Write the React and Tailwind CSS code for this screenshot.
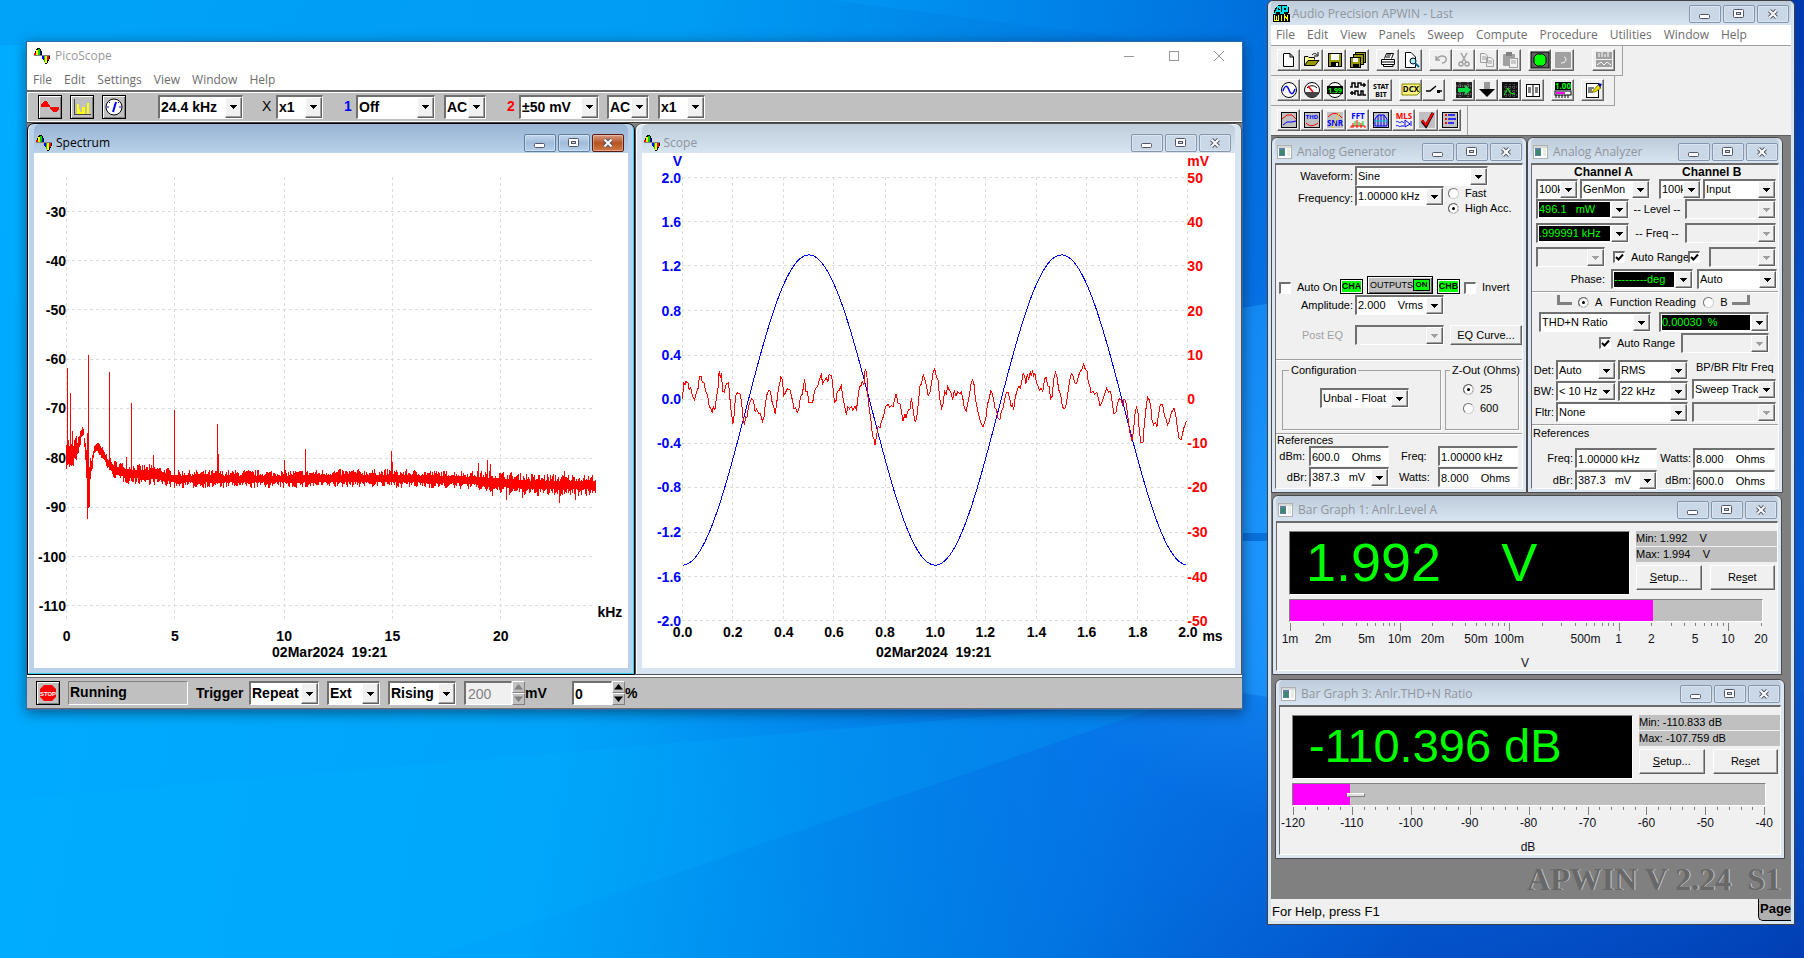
const SANS = "font-['Liberation_Sans',Arial,sans-serif]"
const UI = "font-['Open_Sans','Noto_Sans',sans-serif]"

/* ---------- small drawings ---------- */

function PicoIcon() {
  return (
    <svg className="shrink-0" width="16" height="16" viewBox="0 0 16 16" shapeRendering="crispEdges">
      <path d="M0 8V5H1V3H2V1H3V0H6V1H7V3H8V8H9V12H10V14H11V16H13V15H14V13H15V11H16V7H8V8Z" fill="#000" />
      <rect x="0" y="5" width="2" height="2" fill="#f00" />
      <rect x="2" y="2" width="2" height="5" fill="#ff0" />
      <rect x="4" y="1" width="2" height="6" fill="#0c0" />
      <rect x="6" y="3" width="1" height="4" fill="#00f" />
      <rect x="8" y="8" width="2" height="3" fill="#00f" />
      <rect x="10" y="8" width="2" height="6" fill="#0c0" />
      <rect x="11" y="8" width="2" height="7" fill="#ff0" />
      <rect x="13" y="8" width="2" height="4" fill="#f00" />
      <path d="M0 7.500H16" stroke="#808080" />
    </svg>
  )
}

function DocIcon() {
  return (
    <svg className="shrink-0" width="15" height="14" viewBox="0 0 15 14" shapeRendering="crispEdges">
      <rect x="0.5" y="0.5" width="14" height="13" fill="#fff" stroke="#b0b0b0" />
      <rect x="1" y="1" width="13" height="2" fill="#d8d8d8" />
      <rect x="2" y="3" width="6" height="8" fill="#5b7f9f" />
      <rect x="3" y="5" width="4" height="5" fill="#3a8a6a" />
      <rect x="10" y="3" width="3" height="8" fill="#e4eee4" />
    </svg>
  )
}

function ApIcon() {
  return (
    <svg className="shrink-0" width="17" height="17" viewBox="0 0 17 17" shapeRendering="crispEdges">
      <path d="M1 9V6L3 2L6 0H14L16 3V8L14 9Z" fill="#000" />
      <path d="M2 9L5 2H7L8 9M3 6H8M10 9V2H14V6H10" fill="none" stroke="#00e0e8" strokeWidth="1.500" />
      <rect x="0" y="9" width="17" height="8" fill="#000" />
      <path d="M1.500 10V15H3.500V11V15H5.500V10M8.500 10V16M11.500 16V10L14.500 15V10" fill="none" stroke="#ff0" />
    </svg>
  )
}

/* ---------- window chrome ---------- */

function AeroButtons({ active, name }) {
  const base = active
    ? 'border-[#5f7f9f] bg-linear-to-b from-[#c3d7ec] via-[#a0bcdb] to-[#b5cfea]'
    : 'border-[#8496ae] bg-[#cad7e6]'
  const close = active
    ? 'border-[#5b1a10] bg-linear-to-b from-[#d99a80] via-[#b5541f] to-[#cf7a45]'
    : base
  const cls = 'flex h-[18px] w-8 items-center justify-center rounded-[2px] border shadow-[inset_0_0_0_1px_rgba(255,255,255,0.35)]'
  return (
    <div className="flex shrink-0 gap-0.5">
      <button className={`${cls} ${base}`} aria-label={`Minimize ${name}`}>
        <svg width="12" height="12" viewBox="0 0 12 12">
          <rect x="0.5" y="6.5" width="10" height="4" rx="1" fill="#fff" stroke="#535666" />
        </svg>
      </button>
      <button className={`${cls} ${base}`} aria-label={`Maximize ${name}`}>
        <svg width="12" height="12" viewBox="0 0 12 12">
          <rect x="0.5" y="1.5" width="10" height="8" rx="1" fill="#fff" stroke="#535666" />
          <rect x="3.5" y="4.5" width="4" height="2" fill="#cad7e6" stroke="#535666" />
        </svg>
      </button>
      <button className={`${cls} ${close}`} aria-label={`Close ${name}`}>
        <svg width="12" height="12" viewBox="0 0 12 12">
          <path d="M2.5 2.5L9.5 9.5M9.5 2.5L2.5 9.5" stroke="#535666" strokeWidth="4" />
          <path d="M2.5 2.5L9.5 9.5M9.5 2.5L2.5 9.5" stroke="#fff" strokeWidth="2" />
        </svg>
      </button>
    </div>
  )
}

function ChildWindow({ title, place, children }) {
  return (
    <section className={`absolute flex flex-col rounded-t-[6px] border border-[#4a4a4a] bg-[#dbe6f2] px-[3px] pb-[3px] ${place}`}>
      <header className="flex h-[25px] shrink-0 items-center rounded-t-[5px] bg-linear-to-b from-[#bdcbda] to-[#d8e4f1] pt-0.5 pr-px">
        <span className="pl-0.5"><DocIcon /></span>
        <h2 className={`flex-1 pl-[5px] text-[12px] whitespace-nowrap text-[#8f959c] ${UI}`}>{title}</h2>
        <AeroButtons name={title} />
      </header>
      <div className="min-h-0 flex-1 border border-t-2 border-t-[#6a6a6a] border-l-[#6a6a6a] border-r-white border-b-white bg-[#f0f0f0]">
        {children}
      </div>
    </section>
  )
}

/* ---------- form controls ---------- */

const SUNKEN = 'border-t-2 border-l-2 border-r border-b border-t-[#707070] border-l-[#707070] border-r-white border-b-white'
const RAISED = 'border border-t-white border-l-white border-r-[#606060] border-b-[#606060] bg-[#f0f0f0]'

function Combo({ id, label, value = '', width, disabled, lcd, bold }) {
  const height = bold ? 'h-6' : 'h-5'
  const field = lcd ? 'bg-black text-[#00ff00]' : disabled ? 'bg-[#f0f0f0]' : 'bg-white text-black'
  return (
    <span className={`flex shrink-0 ${height} ${width} ${SUNKEN} ${disabled ? 'bg-[#f0f0f0]' : 'bg-white'}`}>
      <select
        id={id}
        aria-label={label}
        disabled={disabled}
        className={`min-w-0 flex-1 appearance-none ${lcd ? 'm-px' : 'pl-px'} ${field} ${bold ? 'text-[14px] font-bold' : 'text-[11px]'}`}
      >
        <option>{value}</option>
      </select>
      <span className={`pointer-events-none flex w-[17px] shrink-0 items-center justify-center shadow-[inset_-1px_-1px_0_#a0a0a0] ${RAISED}`}>
        <svg width="7" height="4" viewBox="0 0 7 4" shapeRendering="crispEdges">
          <path d="M0 0H7L3.5 4Z" fill={disabled ? '#a0a0a0' : '#000'} />
        </svg>
      </span>
    </span>
  )
}

function Field({ id, value, width }) {
  return <input id={id} defaultValue={value} className={`h-5 shrink-0 bg-white pl-px text-[11px] text-black ${width} ${SUNKEN}`} />
}

function Check({ id, label, checked }) {
  return (
    <span className="relative h-3 w-3 shrink-0">
      <input id={id} type="checkbox" aria-label={label} defaultChecked={checked} className={`peer block h-3 w-3 appearance-none bg-white ${SUNKEN}`} />
      <svg className="pointer-events-none absolute top-0.5 left-0.5 hidden peer-checked:block" width="9" height="9" viewBox="0 0 9 9">
        <path d="M1 4L3.5 6.5L8 1.5" fill="none" stroke="#000" strokeWidth="2" />
      </svg>
    </span>
  )
}

function Radio({ id, name, checked }) {
  return (
    <input
      id={id}
      type="radio"
      name={name}
      defaultChecked={checked}
      className="h-[11px] w-[11px] shrink-0 appearance-none rounded-full border border-t-[#707070] border-r-[#d0d0d0] border-b-[#d0d0d0] border-l-[#707070] bg-white checked:bg-black checked:shadow-[inset_0_0_0_3px_white]"
    />
  )
}

function Rule({ className = '' }) {
  return <div className={`h-0.5 border-t border-b border-t-[#a0a0a0] border-b-white ${className}`} />
}

/* ---------- PicoScope plots ---------- */

// knots of the noise floor: [x, centre, half height]
const FLOOR = [
  [66, 452, 16], [72, 456, 13], [75, 450, 14], [78, 446, 8], [81, 434, 6], [83, 432, 6], [85, 453, 9], [87, 473, 20],
  [89, 480, 20], [91, 466, 8], [94, 450, 6], [96, 447, 6], [100, 451, 6], [106, 460, 6], [111, 468, 7], [118, 471, 9],
  [131, 474, 9], [155, 475, 9], [175, 479, 8], [286, 479, 8], [367, 478, 8], [469, 480, 8], [490, 482, 10],
  [530, 485, 10], [596, 485, 9],
]

// discrete lines: [x, top, bottom]
const LINES = [
  [67, 368, 465], [70, 393, 465], [72, 431, 465], [87, 433, 519], [88, 355, 508], [89, 480, 507], [109, 372, 470],
  [131, 403, 475], [126, 457, 475], [153, 455, 476], [174, 410, 480], [217, 424, 480], [218, 454, 480], [283, 460, 480],
  [304, 449, 480], [390, 451, 480], [391, 462, 480], [477, 463, 480], [486, 460, 480], [489, 464, 480], [491, 480, 496],
  [505, 480, 500], [558, 485, 503], [574, 485, 500], [563, 471, 485], [521, 485, 498],
]

function floorPath() {
  let seed = 7
  const rand = () => {
    seed = (seed * 16807) % 2147483647
    return seed / 2147483647
  }
  let d = ''
  let k = 0
  for (let x = 66; x < 595; x += 1) {
    while (FLOOR[k + 1][0] <= x) k += 1
    const [x0, c0, h0] = FLOOR[k]
    const [x1, c1, h1] = FLOOR[k + 1]
    const t = (x - x0) / (x1 - x0)
    const c = c0 + (c1 - c0) * t
    const h = h0 + (h1 - h0) * t
    const up = h * (0.42 + 0.75 * rand() ** 1.5)
    const down = h * (0.42 + 0.75 * rand() ** 1.5)
    d += `M${x - 33.5} ${Math.round(c - up - 154)}V${Math.round(c + down - 154)}`
  }
  LINES.forEach(([x, top, bottom]) => {
    d += `M${x - 33.5} ${top - 154}V${bottom - 154}`
  })
  return d
}

function SpectrumPlot() {
  const kHz = [0, 5, 10, 15, 20]
  const dB = [-30, -40, -50, -60, -70, -80, -90, -100, -110]
  const px = (f) => Math.round(32 + f * 21.65) + 0.5
  const py = (v) => Math.round(58 + (-30 - v) * 4.91) + 0.5
  return (
    <svg className={`block h-full w-full ${SANS}`} viewBox="0 0 592 514" fontSize="14" fontWeight="700">
      <g stroke="#dcdcdc" strokeDasharray="3 3" shapeRendering="crispEdges">
        {kHz.map((f) => <line key={f} x1={px(f)} x2={px(f)} y1="24" y2="465" />)}
        {dB.map((v) => <line key={v} x1="32" x2="557" y1={py(v)} y2={py(v)} />)}
      </g>
      <path d={floorPath()} stroke="#f00" shapeRendering="crispEdges" />
      {dB.map((v) => <text key={v} x="32" y={py(v) + 5} textAnchor="end">{v}</text>)}
      {kHz.map((f) => <text key={f} x={px(f)} y="487" textAnchor="middle">{f}</text>)}
      <text x="562" y="463">kHz</text>
      <text x="295" y="503" textAnchor="middle">02Mar2024{'\u00a0\u00a0'}19:21</text>
    </svg>
  )
}

// channel 2 samples in display counts, 2.45 per pixel across and 3 per pixel down
const CH2 = `152,118 154,70 158,75 160,66 165,70 168,90 172,85 176,108 181,120 186,98 190,85 193,50 198,52 200,68 204,70 208,95
213,105 217,140 221,148 224,158 227,142 231,150 235,110 239,80 241,35 244,52 247,45 250,95 254,98 258,75 264,68 267,110
270,150 275,193 278,165 281,110 285,100 292,102 296,125 299,170 303,195 306,172 309,175 312,150 315,130 320,118 325,122
329,155 333,148 337,160 342,163 347,185 351,170 354,135 358,105 363,92 367,97 371,130 375,145 378,163 382,130 386,85
389,75 392,52 396,62 399,108 403,100 408,88 414,90 418,110 421,125 424,148 428,145 432,158 436,148 440,110 444,105
447,85 450,58 453,95 457,95 460,128 465,130 470,128 474,95 478,85 482,80 486,60 491,45 494,72 499,62 503,55 507,65
510,45 516,48 519,80 523,128 527,122 530,95 535,92 540,75 543,110 547,135 552,165 556,142 560,148 564,140 568,152
573,140 577,150 580,118 584,82 588,78 591,65 595,75 598,28 602,40 605,110 608,150 612,180 616,228 620,238 622,257
626,228 630,200 634,205 638,185 643,170 648,140 654,135 658,143 662,137 666,142 670,118 674,102 678,130 683,132
688,165 691,185 695,162 698,175 703,152 708,148 711,115 714,140 718,175 721,188 725,165 728,130 732,80 736,72 740,45
744,60 748,78 752,108 756,100 760,72 764,40 768,28 772,50 776,60 780,115 785,145 789,130 792,95 797,105 799,78 803,90
808,100 812,120 816,92 820,110 824,97 829,102 833,98 837,118 840,142 845,155 849,130 853,105 857,70 861,60 864,75
867,115 871,140 875,162 878,180 881,190 886,202 890,188 893,175 897,135 901,115 905,95 909,102 912,120 915,145
919,150 922,175 927,180 931,155 935,145 939,120 943,100 947,97 951,115 955,142 958,135 961,150 965,112 969,95 973,80
977,85 981,65 984,42 988,50 991,72 994,45 998,60 1002,35 1004,50 1007,32 1010,48 1013,42 1017,72 1021,80 1024,92
1028,85 1032,98 1036,60 1040,52 1044,78 1048,82 1051,118 1055,110 1059,60 1063,38 1067,52 1071,90 1076,105 1080,142
1086,148 1090,130 1094,95 1098,60 1102,42 1106,50 1110,70 1115,72 1119,50 1124,35 1129,28 1132,12 1136,30 1140,32
1143,65 1147,80 1150,100 1155,95 1159,105 1164,98 1168,115 1172,138 1176,130 1180,115 1184,100 1188,85 1193,98
1198,95 1202,130 1206,162 1211,158 1215,130 1219,118 1223,120 1227,135 1231,118 1235,125 1240,170 1244,215 1250,243
1254,215 1257,165 1261,140 1265,160 1268,215 1272,248 1277,248 1280,200 1284,150 1288,112 1292,120 1296,140 1299,180
1303,195 1307,188 1311,200 1315,165 1319,135 1325,135 1329,165 1333,178 1337,195 1341,185 1346,160 1353,145 1357,165
1361,205 1365,235 1370,240 1374,220 1378,200 1383,185`

function ScopePlot() {
  const steps = [0, 1, 2, 3, 4, 5, 6, 7, 8, 9, 10]
  const px = (i) => Math.round(40 + i * 50.4) + 0.5
  const py = (i) => Math.round(24 + i * 44.2) + 0.5
  const sine = []
  for (let x = 0; x <= 502; x += 2) {
    const v = -0.1 - 1.4 * Math.cos((2 * Math.PI * x) / 252)
    sine.push(`${x + 40.5},${(245.3 - v * 110.5).toFixed(1)}`)
  }
  const ch2 = CH2.split(/\s+/).map((p) => {
    const [x, y] = p.split(',')
    return `${(x / 2.45 - 21.5).toFixed(1)},${(y / 3 + 206).toFixed(1)}`
  })
  return (
    <svg className={`block h-full w-full ${SANS}`} viewBox="0 0 592 514" fontSize="14" fontWeight="700">
      <g stroke="#dcdcdc" strokeDasharray="3 3" shapeRendering="crispEdges">
        {steps.map((i) => <line key={i} x1={px(i)} x2={px(i)} y1="24" y2="466" />)}
        {steps.map((i) => <line key={i} x1="40" x2="544" y1={py(i)} y2={py(i)} />)}
      </g>
      <polyline points={sine.join(' ')} fill="none" stroke="#00f" shapeRendering="crispEdges" />
      <polyline points={ch2.join(' ')} fill="none" stroke="#f00" shapeRendering="crispEdges" />
      <g fill="#00f" textAnchor="end">
        <text x="40" y="13">V</text>
        {steps.map((i) => <text key={i} x="39" y={py(i) + 5}>{((5 - i) * 0.4).toFixed(1)}</text>)}
      </g>
      <g fill="#f00">
        <text x="544" y="13">mV</text>
        {steps.map((i) => <text key={i} x="544" y={py(i) + 5}>{(5 - i) * 10}</text>)}
      </g>
      {steps.map((i) => <text key={i} x={px(i)} y="483" textAnchor="middle">{(i * 0.2).toFixed(1)}</text>)}
      <text x="559" y="487">ms</text>
      <text x="291" y="503" textAnchor="middle">02Mar2024{'\u00a0\u00a0'}19:21</text>
    </svg>
  )
}

function PlotWindow({ title, active, children }) {
  const frame = active
    ? 'border-black bg-[#b9d1ea] shadow-[inset_-1px_-1px_0_#35d0f0,inset_1px_0_0_#fff]'
    : 'border-[#505050] bg-[#d7e4f2] shadow-[inset_1px_1px_0_#fff]'
  const bar = active ? 'from-[#98b4d2] to-[#b9d1ea]' : 'from-[#bfcddb] to-[#d7e4f2]'
  return (
    <section className={`flex min-w-0 flex-1 flex-col rounded-t-[7px] border px-1.5 pb-1.5 ${frame}`}>
      <header className={`flex h-[31px] items-center rounded-t-[6px] bg-linear-to-b pt-2.5 pr-1 pl-0.5 ${bar}`}>
        <PicoIcon />
        <h2 className={`flex-1 pl-1 text-[12px] ${active ? 'text-black' : 'text-[#8f959c]'} ${UI}`}>{title}</h2>
        <AeroButtons active={active} name={title} />
      </header>
      <div className="flex-1 bg-white">{children}</div>
    </section>
  )
}

function ToolButton({ label, children }) {
  return (
    <button aria-label={label} className="flex h-6 w-6 shrink-0 items-center justify-center border border-black bg-[#c0c0c0] shadow-[inset_1px_1px_0_#fff,inset_-1px_-1px_0_#808080]">
      {children}
    </button>
  )
}

function Spinner({ name, disabled }) {
  const fill = disabled ? '#808080' : '#000'
  return (
    <span className="flex h-6 w-[13px] shrink-0 flex-col">
      <button aria-label={`Increase ${name}`} className="flex flex-1 items-center justify-center border border-t-white border-l-white border-r-[#808080] border-b-[#808080]">
        <svg width="9" height="6" viewBox="0 0 9 6"><path d="M0 5.5L4.5 0L9 5.5Z" fill={fill} /></svg>
      </button>
      <button aria-label={`Decrease ${name}`} className="flex flex-1 items-center justify-center border border-t-white border-l-white border-r-[#808080] border-b-[#808080]">
        <svg width="9" height="6" viewBox="0 0 9 6"><path d="M0 0.5L4.5 6L9 0.5Z" fill={fill} /></svg>
      </button>
    </span>
  )
}

function PicoScope() {
  return (
    <main className="absolute top-[41px] left-[26px] flex h-[669px] w-[1217px] flex-col border border-[#2b6cb0] bg-white shadow-[0_3px_12px_rgba(0,0,0,0.45)]">
      <header className={`flex h-7 items-center pl-[7px] text-[12px] text-[#999] ${UI}`}>
        <PicoIcon />
        <h1 className="flex-1 pl-[5px]">PicoScope</h1>
        <button aria-label="Minimize PicoScope" className="w-[46px]">
          <svg className="mx-auto" width="11" height="11"><path d="M0 5.5H10" stroke="#999" /></svg>
        </button>
        <button aria-label="Maximize PicoScope" className="w-[44px]">
          <svg className="mx-auto" width="11" height="11"><rect x="0.5" y="0.5" width="9" height="9" fill="none" stroke="#999" /></svg>
        </button>
        <button aria-label="Close PicoScope" className="w-[46px]">
          <svg className="mx-auto" width="11" height="11"><path d="M0 0L10 10M10 0L0 10" stroke="#999" /></svg>
        </button>
      </header>
      <nav className={`flex h-5 items-center gap-3 pl-1.5 text-[12px] text-[#6d6d6d] ${UI}`}>
        {['File', 'Edit', 'Settings', 'View', 'Window', 'Help'].map((m) => <button key={m}>{m}</button>)}
      </nav>

      <div className={`flex h-8 items-center border-t-2 border-b border-t-[#6a6a6a] border-b-white bg-[#c0c0c0] pl-[11px] text-[14px] font-bold shadow-[inset_1px_1px_0_#fff] ${SANS}`}>
        <div className="flex gap-2">
          <ToolButton label="Scope">
            <svg width="18" height="18" viewBox="0 0 18 18" shapeRendering="crispEdges">
              <path d="M0 9V7L3 3H6L9 8V9ZM9 9H18V12L15 14H12L9 10Z" fill="#f00" />
            </svg>
          </ToolButton>
          <ToolButton label="Spectrum">
            <svg width="18" height="18" viewBox="0 0 18 18" shapeRendering="crispEdges">
              <path d="M1.5 1V16.5H18" stroke="#444" fill="none" />
              <path d="M4 16V6H6V11H7V14H9V9H12V16ZM14 16V5H16V16Z" fill="#ff0" />
            </svg>
          </ToolButton>
          <ToolButton label="Meter">
            <svg width="18" height="18" viewBox="0 0 18 18">
              <circle cx="9" cy="9" r="8" fill="#fff" stroke="#000" />
              <path d="M11 4L8 14" stroke="#00f" strokeWidth="2" />
              <path d="M2 9H4M14 9H16M4 4L5 5M14 4L13 5" stroke="#00f" />
            </svg>
          </ToolButton>
        </div>
        <div className="flex items-center pl-8">
          <Combo bold label="Spectrum range" value="24.4 kHz" width="w-[85px]" />
          <label htmlFor="xzoom" className="w-[33px] pl-[19px] font-normal">X</label>
          <Combo bold id="xzoom" value="x1" width="w-[47px]" />
          <label htmlFor="ch1" className="w-[33px] pl-[21px] text-[#00f]">1</label>
          <Combo bold id="ch1" value="Off" width="w-[79px]" />
          <span className="w-[9px]" />
          <Combo bold label="Channel 1 coupling" value="AC" width="w-[42px]" />
          <label htmlFor="ch2" className="w-[33px] pl-[21px] text-[#f00]">2</label>
          <Combo bold id="ch2" value="±50 mV" width="w-20" />
          <span className="w-2" />
          <Combo bold label="Channel 2 coupling" value="AC" width="w-[42px]" />
          <span className="w-[9px]" />
          <Combo bold label="Channel 2 zoom" value="x1" width="w-[47px]" />
        </div>
      </div>

      <div className="flex min-h-0 flex-1 border-t border-t-[#404040] bg-[#808080]">
        <PlotWindow title="Spectrum" active><SpectrumPlot /></PlotWindow>
        <PlotWindow title="Scope"><ScopePlot /></PlotWindow>
      </div>

      <footer className={`flex h-[34px] items-center border-t-2 border-b border-t-white border-b-[#6a6a6a] bg-[#c0c0c0] pt-px pl-[9px] text-[14px] font-bold shadow-[inset_0_1px_0_#6a6a6a] ${SANS}`}>
        <ToolButton label="Stop">
          <svg width="18" height="18" viewBox="0 0 18 18">
            <path d="M5 1H13L17 5V13L13 17H5L1 13V5Z" fill="#f00" />
            <text x="9" y="12" fontSize="6" textAnchor="middle" fill="#fff">STOP</text>
          </svg>
        </ToolButton>
        <output className="ml-2 h-6 w-[120px] border border-t-[#808080] border-l-[#808080] border-r-white border-b-white pl-px leading-5">Running</output>
        <label htmlFor="trigger" className="w-[61px] pl-2">Trigger</label>
        <div className="flex gap-2">
          <Combo bold id="trigger" value="Repeat" width="w-[70px]" />
          <Combo bold label="Trigger source" value="Ext" width="w-[53px]" />
          <Combo bold label="Trigger edge" value="Rising" width="w-[68px]" />
        </div>
        <input id="threshold" aria-label="Threshold" disabled defaultValue="200" className={`ml-2 h-6 w-12 bg-[#f0f0f0] pl-0.5 font-normal text-[#808080] ${SUNKEN}`} />
        <Spinner name="threshold" disabled />
        <label htmlFor="threshold" className="w-[47px]">mV</label>
        <input id="delay" aria-label="Delay percent" defaultValue="0" className={`h-6 w-10 bg-white pl-px ${SUNKEN}`} />
        <Spinner name="delay" />
        <label htmlFor="delay">%</label>
      </footer>
    </main>
  )
}

/* ---------- APWIN toolbar ---------- */

const G = '#a0a0a0'

const ICONS = {
  new: <path d="M5 3.5H11L14.500 7V16.500H4.500V3.500M11 3.500V7H14.500" fill="#fff" stroke="#000" />,
  open: <><path d="M2.5 15.500V6.500H6L7 7.500H12.500V9.500" fill="#ff9" stroke="#000" /><path d="M2.500 15.500L6 10.500H17L13 15.500Z" fill="#990" stroke="#000" /><path d="M10 5C12 3 14 3 15 5M16 2V6H12" fill="none" stroke="#000" /></>,
  save: <><rect x="3.5" y="3.5" width="13" height="13" fill="#990" stroke="#000" /><rect x="6" y="4" width="8" height="6" fill="#fff" /><rect x="6" y="12" width="8" height="5" /><rect x="11" y="13" width="2" height="3" fill="#fff" /></>,
  saveAll: <><rect x="7.5" y="2.500" width="10" height="10" fill="#990" stroke="#000" /><rect x="5.500" y="4.500" width="10" height="10" fill="#990" stroke="#000" /><rect x="2.500" y="7.500" width="10" height="10" fill="#990" stroke="#000" /><rect x="5" y="8" width="5" height="4" fill="#fff" /><rect x="5" y="14" width="6" height="3" /></>,
  print: <><path d="M6.5 8.500L8.500 3.500H15.500L13.500 8.500M3.500 9.500H16.500V14.500H3.500ZM5.500 14.500H15V16.500H5.500Z" fill="#fff" stroke="#000" /><path d="M3 12H17M9 5H13M8 7H12" stroke="#000" /></>,
  preview: <><path d="M4.5 2.500H10L14.500 7V17.500H4.500Z" fill="#fff" stroke="#000" /><circle cx="12" cy="11" r="3" fill="#aef" stroke="#000" /><path d="M14 13L18 17" stroke="#069" strokeWidth="2" /></>,
  undo: <path d="M5 6V10H9M5 10C8 5 14 5 15 8C16 11 14 13 11 13" fill="none" stroke={G} strokeWidth="1.5" />,
  cut: <path d="M7 3L12 12M13 3L8 12M9 14A2 2 0 1 1 5 14A2 2 0 1 1 9 14M15 14A2 2 0 1 1 11 14A2 2 0 1 1 15 14" fill="none" stroke={G} strokeWidth="1.500" />,
  copy: <path d="M3.5 3.500H8L10.500 6V12.500H3.500ZM9.500 7.500H14L16.500 10V16.500H9.500ZM5 7H9M5 9H9M11 11H15M11 13H15" fill="none" stroke={G} />,
  paste: <><rect x="3" y="4" width="12" height="12" rx="1" fill={G} /><rect x="6" y="2" width="6" height="4" fill="#808080" /><rect x="9.500" y="8.500" width="8" height="9" fill="#f0f0f0" stroke={G} /><path d="M11 11H16M11 13H16" stroke={G} /></>,
  go: <><rect x="1" y="2" width="18" height="16" fill="#606060" stroke="#000" /><path d="M7 4H13L16 7V13L13 16H7L4 13V7Z" fill="#0f0" stroke="#000" /></>,
  stop: <><rect x="2" y="2" width="16" height="16" rx="1" fill={G} /><path d="M11 7C14 7 14 13 8 13" fill="none" stroke="#fff" /></>,
  dual: <><path d="M2 2H18V9H2ZM2 10H18V17H2Z" fill={G} /><path d="M5 3V7M8 2V7M11 4V7M14 2V7M3 15L7 12L10 15L13 12L17 15" fill="none" stroke="#fff" /></>,
  gen: <><circle cx="10" cy="10" r="7.500" fill="#fff" stroke="#000" /><path d="M4 11C6 5 8 5 10 10C12 15 14 15 16 9" fill="none" stroke="#00f" strokeWidth="1.500" /></>,
  meter: <><circle cx="10" cy="10" r="7.500" fill="#fff" stroke="#000" /><path d="M3 12H17C15 19 5 19 3 12Z" fill="#444" /><path d="M5 8C8 5 12 5 15 8" fill="none" stroke="#000" /><path d="M11 12L6 6" stroke="#f00" strokeWidth="1.500" /></>,
  digital: <><circle cx="10" cy="10" r="7.500" fill="#fff" stroke="#000" /><rect x="2" y="6" width="16" height="8" /><text x="10" y="13" fontSize="7" fontWeight="700" textAnchor="middle" fill="#0f0">1.99</text></>,
  pulses: <path d="M2 7H4V3H7V7H10V3H13V5H18M16 3V7M2 13H7V15M4 11V15M7 15V11H10V15H13V11H15V15H18" fill="none" stroke="#000" strokeWidth="1.500" />,
  stat: <><text x="10" y="9" fontSize="7" fontWeight="700" textAnchor="middle">STAT</text><text x="10" y="17" fontSize="7" fontWeight="700" textAnchor="middle">BIT</text></>,
  dcx: <><path d="M1 4H19V12L16 15H1Z" fill="#fff980" stroke="#880" /><text x="10" y="12" fontSize="8" fontWeight="700" textAnchor="middle">DCX</text></>,
  sw: <><path d="M2 11H6L12 6M14 11H18" fill="none" stroke="#000" strokeWidth="1.500" /><rect x="13" y="10" width="3" height="3" /></>,
  sweep: <><rect x="2" y="2" width="16" height="16" fill="#222" /><path d="M2 6H18M2 14H18M6 2V18M14 2V18" stroke="#999" strokeDasharray="1 1" /><path d="M4 8H11V5L17 10L11 15V12H4Z" fill="#0d4" /></>,
  down: <><path d="M7 2H13V9H7Z" fill="#999" /><path d="M2 9H18L10 17Z" fill="#000" /></>,
  graph: <><rect x="2" y="2" width="16" height="16" fill="#111" /><path d="M6 4V17M10 4V17M14 4V17M4 7H17M4 11H17M4 15H17" stroke="#777" strokeDasharray="1 1" /><path d="M4 15L8 8L10 13L15 14" fill="none" stroke="#0f0" /></>,
  table: <><rect x="3.500" y="4.500" width="13" height="12" fill="#fff" stroke="#000" /><path d="M10 5V16M5 8H8M5 10H8M5 12H8M12 8H15M12 10H15M12 12H15" stroke="#000" /></>,
  bar: <><rect x="2" y="2" width="16" height="8" /><text x="10" y="9" fontSize="8" fontWeight="700" textAnchor="middle" fill="#0f0">1.00</text><rect x="2" y="11" width="16" height="4" fill="#fff" stroke="#000" /><rect x="3" y="12" width="9" height="2" fill="#f0f" /><path d="M3 15V18M6 15V18M9 15V18M12 15V18M15 15V18" stroke="#000" /></>,
  note: <><rect x="3.500" y="3.500" width="12" height="14" fill="#fff" stroke="#000" /><path d="M5 8H11M5 10H9M5 12H10" stroke="#000" /><path d="M9 12L15 5L18 8L12 12Z" fill="#ed0" stroke="#880" /><path d="M15 3L19 4L17 8Z" fill="#00a" /></>,
  curve: <><rect x="2.500" y="2.500" width="15" height="15" fill="#c0c0c0" stroke="#000" /><path d="M3 9L8 5H13L17 9" fill="none" stroke="#f00" /><path d="M4 15L8 12H13L17 11" fill="none" stroke="#00f" /></>,
  thd: <><rect x="2.500" y="2.500" width="15" height="15" fill="#c0c0c0" stroke="#000" /><text x="10" y="9" fontSize="6" fontWeight="700" textAnchor="middle" fill="#00f">THD</text><path d="M4 13C8 17 12 16 16 13" fill="none" stroke="#f00" /></>,
  snr: <><rect x="2" y="2" width="16" height="16" fill="#c0c0c0" /><path d="M3 7C8 2 12 2 17 8" fill="none" stroke="#f00" /><text x="10" y="16" fontSize="8" fontWeight="700" textAnchor="middle" fill="#00f">SNR</text><path d="M14 3L8 18" stroke="#fd0" /></>,
  fft: <><text x="10" y="9" fontSize="8" fontWeight="700" textAnchor="middle" fill="#00f">FFT</text><path d="M3 18V16H17V18M5 18V13M9 18V10M13 18V13" stroke="#f00" fill="none" /><path d="M7 16V11M11 16V12M15 16V11" stroke="#0c0" /></>,
  multi: <><rect x="2.500" y="2.500" width="15" height="15" fill="#c0c0c0" stroke="#000" /><path d="M4 16V9L7 5H13L16 9V16ZM7 5V16M10 5V16M13 5V16" fill="none" stroke="#00f" /><path d="M3 11H17" stroke="#0cc" /></>,
  mls: <><text x="10" y="9" fontSize="8" fontWeight="700" textAnchor="middle" fill="#f00">MLS</text><path d="M2 12C4 10 5 14 7 12C8 11 9 12 10 13M2 16C4 14 5 18 7 16L10 16M11 10L16 14L11 17ZM17 11V16" fill="none" stroke="#00f" /></>,
  check: <><rect x="2" y="2" width="16" height="16" fill="#c0c0c0" /><path d="M5 11L9 16L16 3" fill="none" stroke="#000" strokeWidth="3" /><path d="M5 10L9 15L16 3" fill="none" stroke="#f00" strokeWidth="2" /></>,
  list: <><rect x="2.500" y="2.500" width="15" height="15" fill="#c0c0c0" stroke="#000" /><path d="M8 5H15M8 9H16M8 13H14" stroke="#00f" strokeWidth="1.500" /><path d="M5 5H7M5 9H7M5 13H7" stroke="#f00" strokeWidth="2" /></>,
}

function IconBar({ groups, width }) {
  return (
    <div className={`flex h-[30px] items-center gap-[7px] border-r border-b border-[#a0a0a0] pb-px pl-1.5 ${width}`}>
      {groups.map((g, i) => (
        <div key={i} className="flex empty:w-1">
          {g.map((n) => (
            <button key={n} aria-label={n} className={`flex h-[22px] w-[23px] items-center justify-center shadow-[inset_-1px_-1px_0_#a0a0a0] ${RAISED}`}>
              <svg width="20" height="20" viewBox="0 0 20 20">{ICONS[n]}</svg>
            </button>
          ))}
        </div>
      ))}
    </div>
  )
}

/* ---------- APWIN panels ---------- */

const sp = (n) => '\u00a0'.repeat(n)

function Generator() {
  return (
    <ChildWindow title="Analog Generator" place="top-px left-0 h-[356px] w-[256px]">
      <div className="flex items-center pt-px">
        <label htmlFor="wave" className="w-[79px] pr-0.5 text-right">Waveform:</label>
        <Combo id="wave" value="Sine" width="w-[133px]" />
      </div>
      <div className="flex items-start">
        <label htmlFor="freq" className="w-[79px] pr-0.5 text-right leading-6">Frequency:</label>
        <Combo id="freq" value="1.00000 kHz" width="w-[89px]" />
        <div className="flex flex-col pl-1">
          <label className="flex h-[15px] items-center gap-1.5"><Radio name="acc" />Fast</label>
          <label className="flex h-[15px] items-center gap-1.5"><Radio name="acc" checked />High Acc.</label>
        </div>
      </div>
      <div className="mt-[60px] flex h-[18px] items-end pl-[3px]">
        <label className="flex w-[61px] items-center gap-1.5 whitespace-nowrap"><Check />Auto On</label>
        <button className="h-[15px] w-[23px] border border-black bg-[#0f0] text-[9px] font-bold shadow-[inset_0_0_0_1px_#fff]">CHA</button>
        <button className="mx-1 flex h-[18px] w-[66px] items-center justify-between border border-black bg-[#c0c0c0] pr-0.5 pl-0.5 text-[9px] shadow-[inset_1px_1px_0_#fff,inset_-1px_-1px_0_#606060]">
          OUTPUTS
          <span className="h-3 w-[17px] border border-black bg-[#0f0] text-[8px] leading-[10px] font-bold">ON</span>
        </button>
        <button className="h-[15px] w-[23px] border border-black bg-[#0f0] text-[9px] font-bold shadow-[inset_0_0_0_1px_#fff]">CHB</button>
        <label className="flex items-center gap-1.5 pl-1"><Check />Invert</label>
      </div>
      <div className="flex items-center pt-px">
        <label htmlFor="amp" className="w-[79px] pr-0.5 text-right">Amplitude:</label>
        <Combo id="amp" value={`2.000${sp(4)}Vrms`} width="w-[89px]" />
      </div>
      <div className="mt-2.5 flex items-center">
        <label htmlFor="posteq" className="w-[79px] pl-[26px] text-[#a0a0a0]">Post EQ</label>
        <Combo id="posteq" disabled width="w-[89px]" />
        <button className={`ml-1.5 h-5 flex-1 shadow-[inset_-1px_-1px_0_#a0a0a0] ${RAISED}`}>EQ Curve...</button>
      </div>
      <Rule className="mt-3.5" />
      <div className="mt-[3px] flex gap-1 pr-0.5 pl-1.5">
        <fieldset className="h-[66px] w-[159px] border border-[#a0a0a0] shadow-[1px_1px_0_#fff]">
          <legend className="ml-1.5 px-0.5 leading-3">Configuration</legend>
          <div className="pt-3 pl-[37px]">
            <Combo label="Configuration" value="Unbal - Float" width="w-[89px]" />
          </div>
        </fieldset>
        <fieldset className="h-[66px] w-[74px] min-w-0 border border-[#a0a0a0] shadow-[1px_1px_0_#fff]">
          <legend className="ml-1 px-0.5 leading-3 whitespace-nowrap">Z-Out (Ohms)</legend>
          <div className="flex flex-col gap-1 pt-1.5 pl-[17px]">
            <label className="flex h-[15px] items-center gap-1.5"><Radio name="zout" checked />25</label>
            <label className="flex h-[15px] items-center gap-1.5"><Radio name="zout" />600</label>
          </div>
        </fieldset>
      </div>
      <Rule className="mt-[3px] border-t-[#808080]" />
      <div className="pl-px leading-[11px]">References</div>
      <div className="grid grid-cols-[33px_80px_49px_80px] items-center gap-y-px">
        <label htmlFor="gdbm" className="pr-1 text-right">dBm:</label>
        <Field id="gdbm" value={`600.0${sp(4)}Ohms`} width="w-20" />
        <label htmlFor="gfreq" className="pl-3">Freq:</label>
        <Field id="gfreq" value="1.00000 kHz" width="w-20" />
        <label htmlFor="gdbr" className="pr-0.5 text-right">dBr:</label>
        <Combo id="gdbr" value={`387.3${sp(3)}mV`} width="w-20" />
        <label htmlFor="gwatts" className="pl-2.5">Watts:</label>
        <Field id="gwatts" value={`8.000${sp(4)}Ohms`} width="w-20" />
      </div>
    </ChildWindow>
  )
}

function Analyzer() {
  return (
    <ChildWindow title="Analog Analyzer" place="top-px left-64 h-[356px] w-[256px]">
      <div className="flex h-3.5 items-center pl-[42px] text-[12px] font-bold">
        <span className="w-[108px]">Channel A</span>
        <span>Channel B</span>
      </div>
      <div className="flex pl-1">
        <Combo label="Channel A impedance" value="100k" width="w-[42px]" />
        <span className="w-0.5" />
        <Combo label="Channel A source" value="GenMon" width="w-[70px]" />
        <span className="w-[9px]" />
        <Combo label="Channel B impedance" value="100k" width="w-[42px]" />
        <span className="w-0.5" />
        <Combo label="Channel B source" value="Input" width="w-[73px]" />
      </div>
      <div className="flex items-center justify-between pr-0.5 pl-1">
        <Combo lcd label="Channel A level" value={`496.1${sp(3)}mW`} width="w-[93px]" />
        <span>-- Level --</span>
        <Combo disabled label="Channel B level" width="w-[91px]" />
      </div>
      <div className="mt-1 flex items-center justify-between pr-0.5 pl-1">
        <Combo lcd label="Channel A frequency" value=".999991 kHz" width="w-[93px]" />
        <span>-- Freq --</span>
        <Combo disabled label="Channel B frequency" width="w-[91px]" />
      </div>
      <div className="mt-1 flex items-center pl-1">
        <Combo disabled label="Channel A range" width="w-[69px]" />
        <label className="ml-2 flex w-[75px] items-center gap-1.5 overflow-hidden whitespace-nowrap"><Check checked />Auto Range</label>
        <Check label="Auto range B" checked />
        <span className="w-[9px]" />
        <Combo disabled label="Channel B range" width="w-[67px]" />
      </div>
      <div className="mt-0.5 flex items-center">
        <label htmlFor="phase" className="w-[79px] pr-1.5 text-right">Phase:</label>
        <Combo lcd id="phase" value="---------deg" width="w-[82px]" />
        <span className="w-1" />
        <Combo label="Phase range" value="Auto" width="w-20" />
      </div>
      <Rule className="mt-0.5" />
      <div className="flex h-[19px] items-center pl-[25px]">
        <span className="mb-1.5 h-2.5 w-[15px] border-b-[3px] border-l-[3px] border-[#808080]" />
        <label className="flex items-center gap-1.5 pl-1.5"><Radio name="fn" checked />A</label>
        <span className="w-[101px] text-center">Function Reading</span>
        <label className="flex items-center gap-1.5"><Radio name="fn" />B</label>
        <span className="mb-1.5 ml-1 h-2.5 w-[18px] border-r-[3px] border-b-[3px] border-[#808080]" />
      </div>
      <div className="flex gap-2 pl-[7px]">
        <Combo label="Function" value="THD+N Ratio" width="w-28" />
        <Combo lcd label="Reading" value={`0.00030${sp(2)}%`} width="w-[110px]" />
      </div>
      <div className="mt-px flex items-center pl-[67px]">
        <label className="flex w-[82px] items-center gap-1.5 whitespace-nowrap"><Check checked />Auto Range</label>
        <Combo disabled label="Reading range" width="w-[88px]" />
      </div>
      <div className="mt-[7px] flex">
        <div className="grid grid-cols-[22px_60px_70px] items-center gap-x-0.5 gap-y-px">
          <label htmlFor="det" className="text-right">Det:</label>
          <Combo id="det" value="Auto" width="w-[60px]" />
          <Combo label="Detector" value="RMS" width="w-[70px]" />
          <label htmlFor="bw" className="text-right">BW:</label>
          <Combo id="bw" value="< 10 Hz" width="w-[60px]" />
          <Combo label="Upper bandwidth" value="22 kHz" width="w-[70px]" />
          <label htmlFor="fltr" className="text-right">Fltr:</label>
          <Combo id="fltr" value="None" width="w-[132px]" />
        </div>
        <div className="flex flex-col pl-1">
          <label htmlFor="bpbr" className="h-[19px] pl-1 leading-[14px] whitespace-nowrap">BP/BR Fltr Freq</label>
          <Combo id="bpbr" value="Sweep Track" width="w-[84px]" />
          <span className="h-[3px]" />
          <Combo disabled label="Filter frequency" width="w-[84px]" />
        </div>
      </div>
      <Rule className="mt-0.5" />
      <div className="pl-px leading-[14px]">References</div>
      <div className="grid grid-cols-[43px_82px_36px_82px] items-center gap-y-0.5 pt-2">
        <label htmlFor="afreq" className="pr-0.5 text-right">Freq:</label>
        <Field id="afreq" value="1.00000 kHz" width="w-[82px]" />
        <label htmlFor="awatts" className="pr-0.5 text-right">Watts:</label>
        <Field id="awatts" value={`8.000${sp(4)}Ohms`} width="w-[82px]" />
        <label htmlFor="adbr" className="pr-0.5 text-right">dBr:</label>
        <Combo id="adbr" value={`387.3${sp(3)}mV`} width="w-[82px]" />
        <label htmlFor="adbm" className="pr-0.5 text-right">dBm:</label>
        <Field id="adbm" value={`600.0${sp(4)}Ohms`} width="w-[82px]" />
      </div>
    </ChildWindow>
  )
}

function BarGraph({ title, place, reading, size, min, max, fill, marker, ticks, unit }) {
  return (
    <ChildWindow title={title} place={place}>
      <div className="flex h-full flex-col px-3 pt-2">
        <div className="-mr-3 flex gap-1.5">
          <output className={`h-16 w-[341px] shrink-0 border border-t-[#808080] border-l-[#808080] border-r-white border-b-white bg-black pl-4 leading-[60px] whitespace-nowrap text-[#0f0] ${size}`}>
            {reading}
          </output>
          <div className="flex flex-1 flex-col">
            <div className="h-[15px] bg-[#c0c0c0] leading-[14px]">Min: {min}</div>
            <div className="mt-px h-[15px] bg-[#c0c0c0] leading-[14px]">Max: {max}</div>
            <div className="mt-[3px] flex gap-2 pr-0.5">
              <button className={`h-[25px] flex-1 shadow-[inset_-1px_-1px_0_#a0a0a0] ${RAISED}`}><u>S</u>etup...</button>
              <button className={`h-[25px] flex-1 shadow-[inset_-1px_-1px_0_#a0a0a0] ${RAISED}`}>Re<u>s</u>et</button>
            </div>
          </div>
        </div>
        <div className="relative mt-1 h-6 w-[474px] border border-t-[#808080] border-l-[#808080] border-r-white border-b-white bg-[#c0c0c0]">
          <div className="h-full bg-[#f0f]" style={{ width: `${fill}%` }} />
          {marker && (
            <div
              className="absolute top-[9px] h-1 border border-t-white border-l-white border-r-[#808080] border-b-[#808080] bg-[#e0e0e0]"
              style={{ left: `${marker[0]}%`, width: `${marker[1]}%` }}
            />
          )}
        </div>
        <svg className="-ml-3 block shrink-0 overflow-visible" width="498" height="48" viewBox="-12 0 498 48" fontSize="12">
          {ticks.map(([x, text, long]) => (
            <g key={x}>
              <path d={`M${Math.round(x) + 0.5} 1V${long ? 9 : 4}`} stroke="#808080" shapeRendering="crispEdges" />
              {text && <text x={x} y="21" textAnchor="middle" fill="#101020">{text}</text>}
            </g>
          ))}
          <text x="236" y="45" textAnchor="middle" fill="#101020">{unit}</text>
        </svg>
      </div>
    </ChildWindow>
  )
}

const VOLT_LABELS = { 0.001: '1m', 0.002: '2m', 0.005: '5m', 0.01: '10m', 0.02: '20m', 0.05: '50m', 0.1: '100m', 0.5: '500m', 1: '1', 2: '2', 5: '5', 10: '10', 20: '20' }
const voltTicks = []
for (let dec = -3; dec <= 1; dec += 1) {
  for (let m = 1; m < 10; m += 1) {
    const v = Number((m * 10 ** dec).toPrecision(1))
    if (v <= 20) voltTicks.push([(Math.log10(v) + 3) * 109.5 + 1, VOLT_LABELS[v], m === 1])
  }
}

const dbTicks = []
for (let v = -120; v <= -40; v += 2) {
  dbTicks.push([(v + 120) * 5.89 + 1, v % 10 === 0 ? String(v) : null, v % 10 === 0])
}

function Apwin() {
  return (
    <section className="absolute top-0 left-[1267px] flex h-[925px] w-[528px] flex-col rounded-t-[6px] border border-[#404040] bg-[#d7e4f2] px-[3px] pb-[3px]">
      <header className="flex h-6 shrink-0 items-center bg-linear-to-b from-[#bdcbda] to-[#d8e4f1] pt-px pr-0.5 pl-0.5">
        <ApIcon />
        <h1 className={`flex-1 pl-0.5 text-[12px] text-[#8f959c] ${UI}`}>Audio Precision APWIN - Last</h1>
        <AeroButtons name="APWIN" />
      </header>
      <nav className={`flex h-5 shrink-0 items-center gap-3 bg-white pl-[5px] text-[12px] text-[#6d6d6d] ${UI}`}>
        {['File', 'Edit', 'View', 'Panels', 'Sweep', 'Compute', 'Procedure', 'Utilities', 'Window', 'Help'].map((m) => <button key={m}>{m}</button>)}
      </nav>
      <div className="h-[90px] shrink-0 border-t border-[#a0a0a0] bg-[#f0f0f0]">
        <IconBar width="w-[352px]" groups={[['new', 'open', 'save', 'saveAll'], ['print', 'preview'], ['undo', 'cut', 'copy', 'paste'], ['go', 'stop'], [], ['dual']]} />
        <IconBar width="w-[344px]" groups={[['gen', 'meter', 'digital', 'pulses', 'stat'], ['dcx', 'sw'], ['sweep', 'down', 'graph', 'table'], ['bar'], ['note']]} />
        <IconBar width="w-[197px]" groups={[['curve', 'thd', 'snr', 'fft', 'multi', 'mls', 'check', 'list']]} />
      </div>

      <div className={`relative flex min-h-0 flex-1 flex-col justify-end border-t border-[#606060] bg-[#808080] text-[11px] leading-[13px] text-black ${SANS}`}>
        <div className="pr-2.5 pb-0.5 text-right font-['Liberation_Serif','Times_New_Roman',serif] text-[32px] leading-9 font-bold whitespace-pre text-[#686868] [text-shadow:1px_0_0_#c8c8c8]">
          {'APWIN V 2.24  S1'}
        </div>
        <Generator />
        <Analyzer />
        <BarGraph
          title="Bar Graph 1: Anlr.Level A"
          place="top-[359px] left-px h-[180px] w-[510px]"
          reading={`1.992${sp(4)}V`}
          size="text-[54px]"
          min={`1.992${sp(4)}V`}
          max={`1.994${sp(4)}V`}
          fill={76.9}
          ticks={voltTicks}
          unit="V"
        />
        <BarGraph
          title="Bar Graph 3: Anlr.THD+N Ratio"
          place="top-[543px] left-1 h-[180px] w-[510px]"
          reading="-110.396 dB"
          size="text-[47px]"
          min="-110.833 dB"
          max="-107.759 dB"
          fill={12.1}
          marker={[11.5, 3.8]}
          ticks={dbTicks}
          unit="dB"
        />
      </div>
      <footer className={`flex h-[22px] shrink-0 items-center justify-between bg-[#f0f0f0] pl-px text-[13px] ${SANS}`}>
        <span className="pt-1">For Help, press F1</span>
        <span className="h-full w-[33px] overflow-hidden rounded-bl-[5px] border-b border-l border-black bg-[#b0b0b0] pl-px leading-[19px] font-bold">Page</span>
      </footer>
    </section>
  )
}

// light coming through the two window panes on the wallpaper
function Backdrop() {
  return (
    <svg className="absolute inset-0 h-full w-full" viewBox="0 0 1804 958" preserveAspectRatio="none">
      <path d="M1180 318L1290 300V533H1180Z" fill="#1e9bff" opacity="0.55" />
      <path d="M1180 541H1290V700L1180 684Z" fill="#1e9bff" opacity="0.65" />
      <path d="M1180 533H1290V541H1180Z" fill="#0060c8" opacity="0.6" />
      <path d="M0 800L1180 700L430 958H0Z" fill="#00b8ff" opacity="0.18" />
      <path d="M0 0H830L1180 45H0Z" fill="#0060c8" opacity="0.12" />
    </svg>
  )
}

export default function App() {
  return (
    <div className="relative min-h-screen overflow-hidden bg-[radial-gradient(ellipse_45%_60%_at_78%_58%,#1e98ff_0%,rgba(10,120,240,0.5)_50%,transparent_100%),linear-gradient(100deg,#00acff_0%,#00a4fa_35%,#0074e0_62%,#0040b8_80%,#0034a8_100%)]">
      <Backdrop />
      <PicoScope />
      <Apwin />
    </div>
  )
}
